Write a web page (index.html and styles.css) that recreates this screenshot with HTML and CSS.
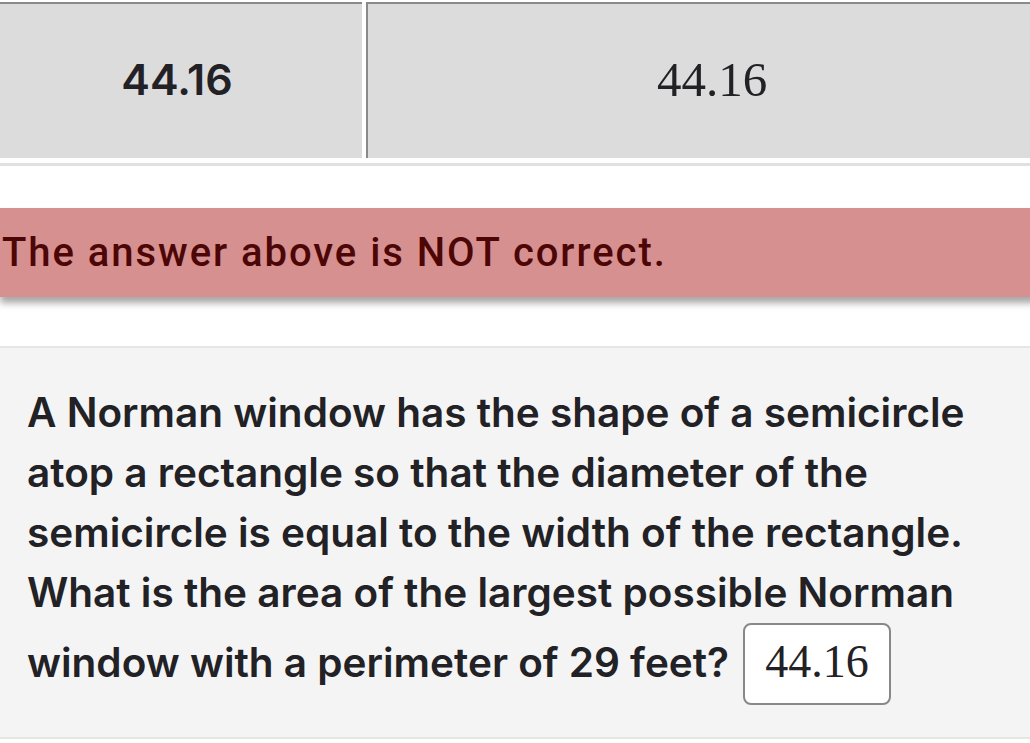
FILE: index.html
```html
<!DOCTYPE html>
<html>
<head>
<meta charset="utf-8">
<link rel="stylesheet" href="styles.css">
</head>
<body>
<div class="page">
  <div class="answer-table">
    <div class="answer-row">
      <div class="cell cell-entered">44.16</div>
      <div class="cell cell-preview">44.16</div>
    </div>
  </div>

  <div class="alert">The answer above is NOT correct.</div>

  <div class="problem">
    <p class="problem-text">A Norman window has the shape of a semicircle atop a rectangle so that the diameter of the semicircle is equal to the width of the rectangle. What is the area of the largest possible Norman window with a perimeter of 29 feet? <span class="answer-box">44.16</span></p>
  </div>
</div>
</body>
</html>
```

FILE: styles.css
```css
html, body {
  margin: 0;
  padding: 0;
  background: #ffffff;
  overflow: hidden;
}

.page {
  width: 1056px;
  padding-top: 2px;
}

.answer-table {
  padding-bottom: 5px;
  border-bottom: 3px solid #e0e0e0;
}

.answer-row {
  display: flex;
  gap: 4px;
  height: 156px;
}

.cell {
  background: #dcdcdc;
  border-top: 2px solid #8a8a8a;
  display: flex;
  align-items: center;
  justify-content: center;
  color: #222226;
}

.cell-entered {
  width: 362px;
  font-family: Inter, "Noto Sans", sans-serif;
  font-weight: 600;
  font-size: 43px;
  padding-right: 8px;
  padding-bottom: 4px;
  box-sizing: border-box;
}

.cell-preview {
  flex: 1;
  border-left: 2px solid #8a8a8a;
  font-family: "Liberation Serif", "DejaVu Serif", serif;
  font-size: 49px;
  padding-bottom: 4px;
}

.alert {
  margin-top: 42px;
  height: 89px;
  box-sizing: border-box;
  background: #d69090;
  color: #4d0606;
  font-family: Roboto, "Noto Sans", sans-serif;
  font-weight: 500;
  font-size: 40px;
  letter-spacing: 1.95px;
  line-height: 89px;
  padding-left: 2px;
  box-shadow: 0 6px 7px rgba(0, 0, 0, 0.35);
}

.problem {
  margin-top: 49px;
  background: #f4f4f4;
  border-top: 2px solid #e6e6e6;
  border-bottom: 2px solid #e6e6e6;
  padding: 35px 0 36px 27px;
  height: 393px;
  box-sizing: border-box;
}

.problem-text {
  margin: 0;
  width: 990px;
  font-family: Inter, "Noto Sans", sans-serif;
  font-weight: 600;
  font-size: 40.5px;
  line-height: 60px;
  color: #222226;
}

.answer-box {
  display: inline-block;
  margin-left: 4px;
  background: #ffffff;
  border: 2px solid #888888;
  border-radius: 8px;
  padding: 14px 20px 18px 20px;
  font-family: "Liberation Serif", "DejaVu Serif", serif;
  font-weight: 400;
  font-size: 46px;
  line-height: 46px;
  color: #222226;
}
```
